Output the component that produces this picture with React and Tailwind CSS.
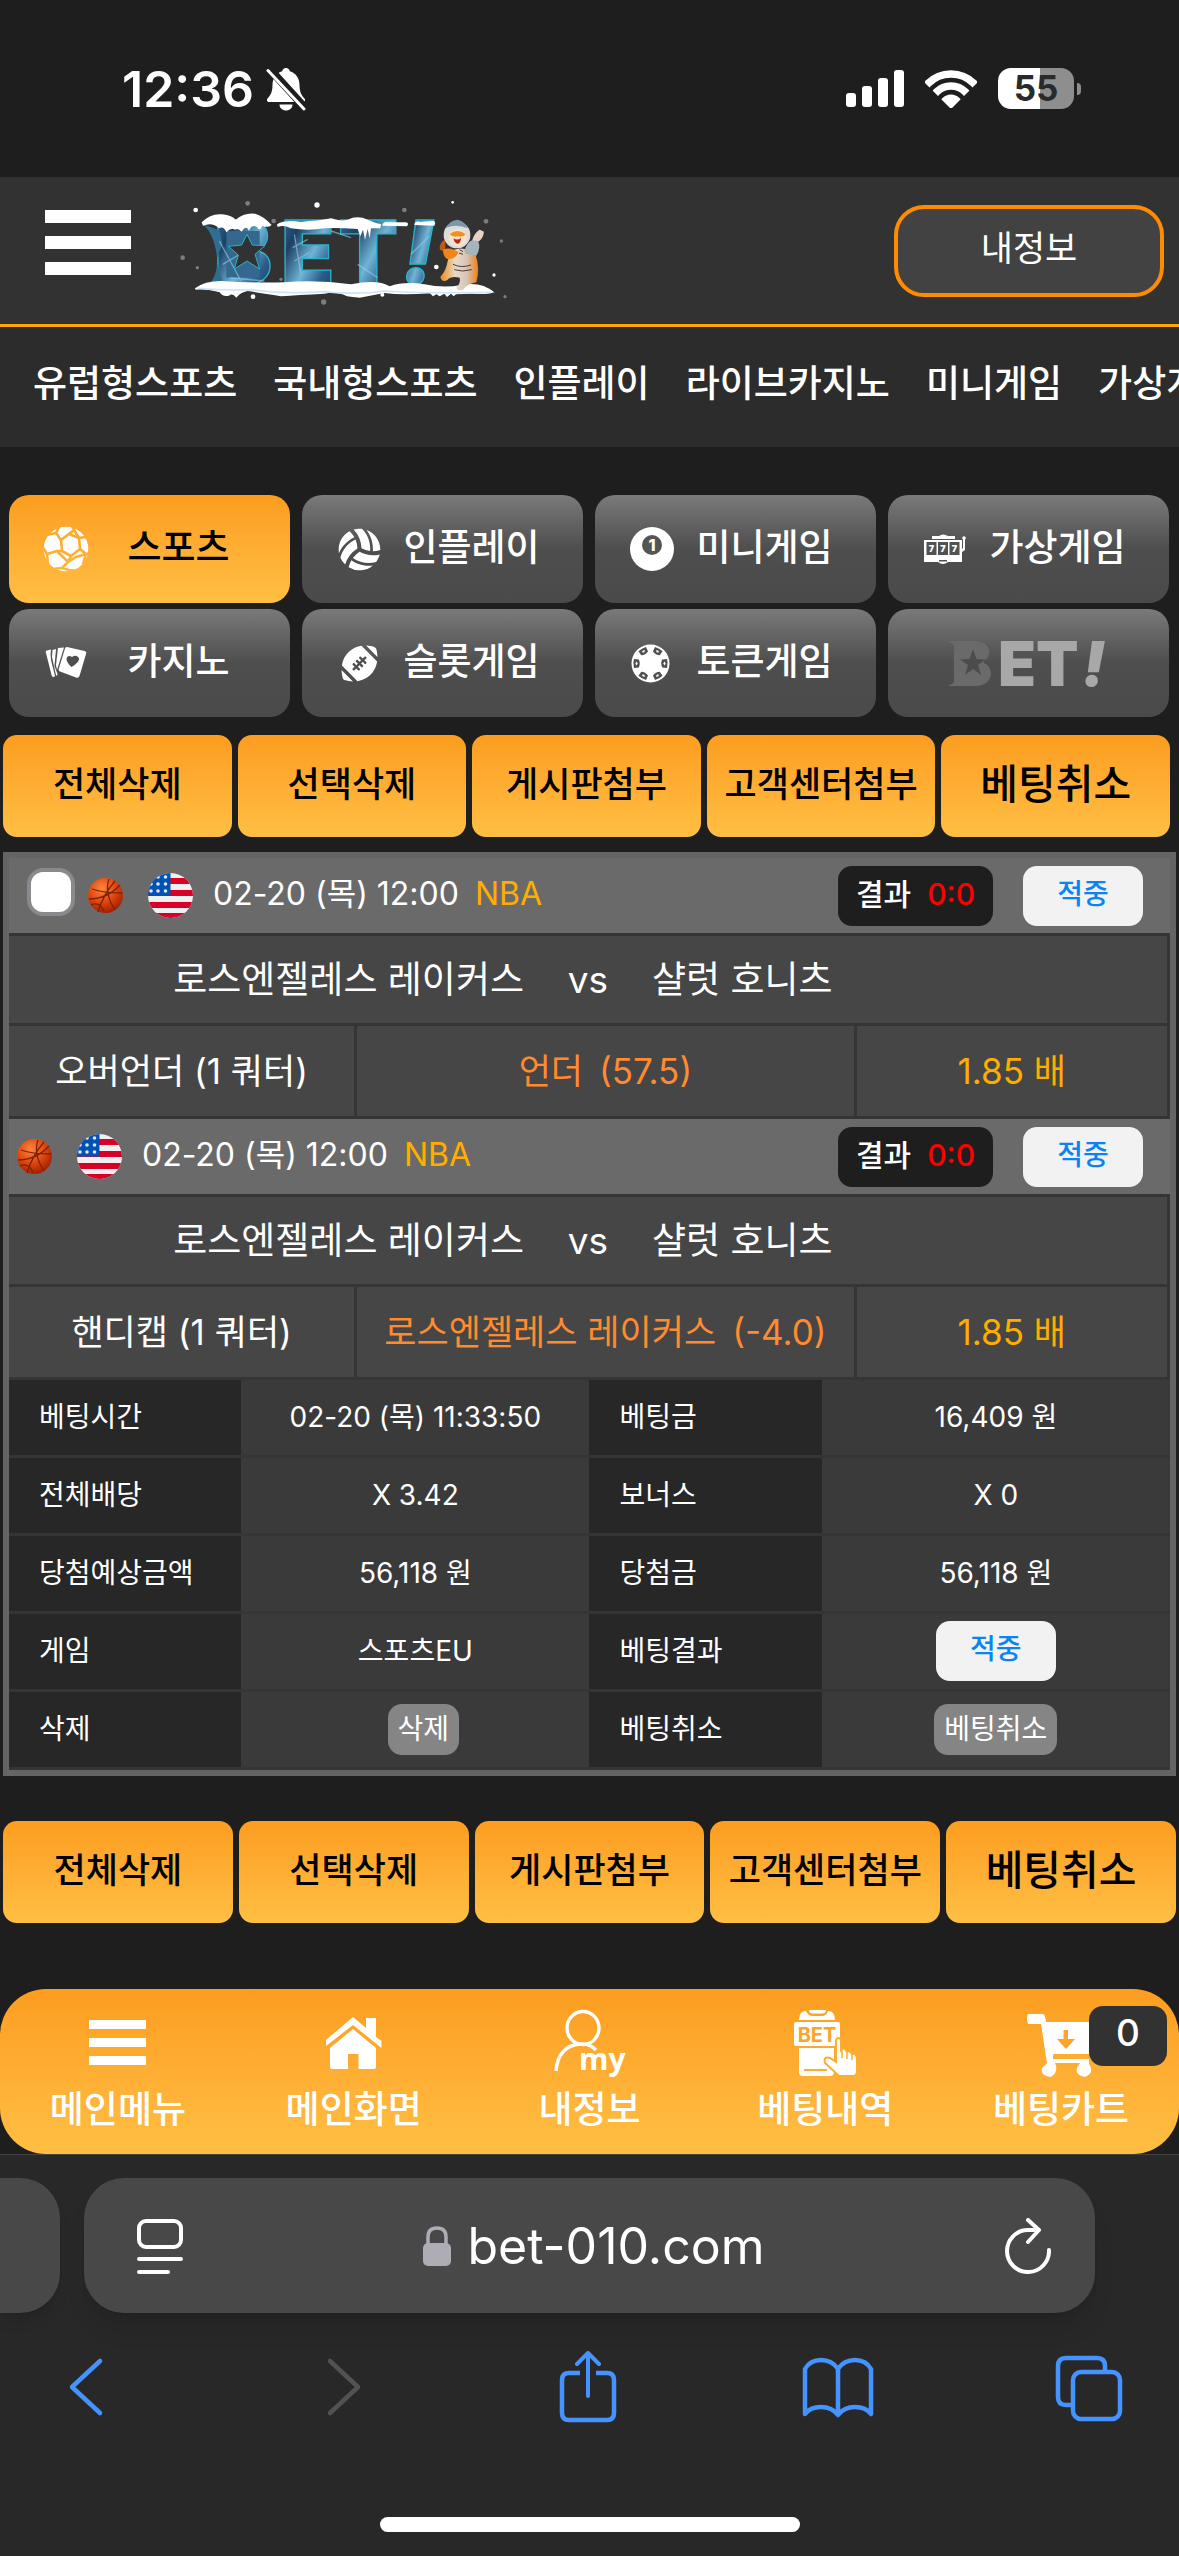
import React, { useState } from 'react';
import { FaFootballBall, FaVolleyballBall } from 'react-icons/fa';

const navLinks = ['유럽형스포츠', '국내형스포츠', '인플레이', '라이브카지노', '미니게임', '가상게임'];

const actions = ['전체삭제', '선택삭제', '게시판첨부', '고객센터첨부'];

const bets = [
  { date: '02-20 (목) 12:00', market: '오버언더 (1 쿼터)', pick: '언더', line: '(57.5)', selectable: true },
  { date: '02-20 (목) 12:00', market: '핸디캡 (1 쿼터)', pick: '로스엔젤레스 레이커스', line: '(-4.0)', selectable: false },
];

function BellOffIcon() {
  return (
    <svg className="h-11 w-10" viewBox="0 0 40 44" fill="white" aria-hidden="true">
      <mask id="bell-cut">
        <rect width="40" height="44" fill="white" />
        <path d="M0 -2 L42 44" stroke="black" strokeWidth="8" />
      </mask>
      <g mask="url(#bell-cut)">
        <path d="M20 1c2.200 0 3.600 1.500 3.800 3.300 6 1.800 9.700 7 9.700 13.700 0 8 2.500 10.500 5 13.500 1.300 1.700.3 3.500-1.800 3.500H3.300c-2.100 0-3.100-1.800-1.800-3.500C4 28.500 6.500 26 6.500 18c0-6.700 3.700-11.900 9.700-13.700C16.400 2.500 17.800 1 20 1z" />
        <path d="M13.500 37.500h13c0 3.500-3 6-6.500 6s-6.500-2.500-6.500-6z" />
      </g>
      <path d="M2 3.500 L38 42" stroke="white" strokeWidth="3" strokeLinecap="round" />
    </svg>
  );
}

function StatusIcons() {
  return (
    <div className="flex items-center">
      <svg className="h-[38px] w-[60px]" viewBox="0 0 60 38" fill="white" aria-hidden="true">
        <rect x="1" y="23" width="10" height="14" rx="3" />
        <rect x="17" y="16" width="10" height="21" rx="3" />
        <rect x="33" y="8" width="10" height="29" rx="3" />
        <rect x="49" y="0" width="10" height="37" rx="3" />
      </svg>
      <svg className="ml-5 h-[38px] w-[52px]" viewBox="0 0 52 38" fill="none" stroke="white" aria-hidden="true">
        <clipPath id="wifi-fan">
          <path d="M26 39 L-8 5 L-8 -6 L60 -6 L60 5 Z" />
        </clipPath>
        <g clipPath="url(#wifi-fan)">
          <circle cx="26" cy="36.500" r="32.500" strokeWidth="7.500" />
          <circle cx="26" cy="36.500" r="20.500" strokeWidth="7.500" />
          <circle cx="26" cy="36.500" r="6" strokeWidth="12" />
        </g>
      </svg>
      <div className="ml-[21px] flex items-center">
        <div className="flex h-[41px] w-[76px] items-center justify-center rounded-[13px] bg-[linear-gradient(90deg,#fff_55%,#8e8e8e_55%)] text-[35px] leading-none font-bold text-[#2a2a2a]">
          55
        </div>
        <div className="ml-[3px] h-3 w-1 rounded-r-full bg-[#8e8e8e]" />
      </div>
    </div>
  );
}

function SnowLogo() {
  return (
    <svg className="h-[140px] w-[400px] overflow-visible" viewBox="0 0 1200 420" role="img" aria-label="BET!">
      <defs>
        <linearGradient id="ice" x1="0" y1="0" x2="1" y2="1">
          <stop offset="0" stopColor="#3f86ae" />
          <stop offset="0.3" stopColor="#1d3f63" />
          <stop offset="0.55" stopColor="#6fb4d6" />
          <stop offset="0.75" stopColor="#2a5c8a" />
          <stop offset="1" stopColor="#16365c" />
        </linearGradient>
        <linearGradient id="tiger" x1="0" y1="0" x2="1" y2="0">
          <stop offset="0" stopColor="#f08a1c" />
          <stop offset="0.4" stopColor="#e8d8c8" />
          <stop offset="0.7" stopColor="#d8c4b4" />
          <stop offset="1" stopColor="#ee7f12" />
        </linearGradient>
      </defs>
      <g fill="url(#ice)" stroke="#28b4cc" strokeWidth="4" fontFamily="Inter, sans-serif" fontWeight="900" fontSize="262">
        <text x="188" y="308">B</text>
        <text x="390" y="308">E</text>
        <text x="562" y="308">T</text>
        <text x="752" y="308" fontStyle="italic">!</text>
      </g>
      <rect x="226" y="150" width="100" height="140" fill="#34688f" />
      <path d="M156 130 L205 148 L215 190 L198 230 Q190 160 156 130Z M198 250 L215 300 L180 304Q196 280 198 250Z" fill="#2f6d93" />
      <g stroke="#8fd0e8" strokeWidth="4" opacity="0.6" fill="none">
        <path d="M205 180 L270 300 M215 250 L300 200 M235 290 L340 300 M430 160 L450 280 M425 200 L470 175 M430 240 L475 215 M540 150 L600 170 M620 250 L680 290 M780 220 L835 165" />
      </g>
      <path d="M288 160 L304 192 L342 194 L312 220 L326 264 L288 240 L250 264 L262 222 L232 196 L272 192Z" fill="#323232" stroke="#28b4cc" strokeWidth="3" />
      <g fill="white">
        <path d="M152 124 Q180 96 214 100 Q244 104 254 116 Q280 94 312 98 Q336 104 362 132 Q350 142 334 134 Q326 154 318 138 Q302 128 294 150 Q286 130 272 152 Q262 140 252 146 Q240 138 226 154 Q218 134 204 142 Q184 122 156 134Z" />
        <path d="M378 130 Q400 116 450 122 Q500 120 540 112 Q570 122 590 116 Q620 102 650 116 Q674 126 690 130 L688 142 L660 142 L656 172 L650 144 L642 176 L636 146 L628 166 L620 144 Q560 140 520 142 Q470 150 420 142 Q396 130 380 138Z" />
        <path d="M694 134 Q696 120 712 124 L764 124 Q776 126 768 136Z M790 132 Q792 118 808 122 L848 120 Q856 124 850 134Z" />
        <path d="M132 322 Q160 300 210 300 Q300 306 400 304 Q500 296 600 310 Q680 294 716 316 Q760 300 820 310 Q880 322 930 312 Q990 300 1030 334 Q1010 342 960 338 L915 340 L908 346 L900 338 L888 348 L880 338 L866 346 L856 340 L846 346 L836 336 Q760 344 700 336 Q660 344 626 350 Q600 348 588 346 Q560 330 520 338 Q440 342 390 346 Q330 336 290 330 Q268 334 256 350 Q244 334 234 344 Q214 348 206 334 Q160 322 134 326Z" />
      </g>
      <path d="M140 322 Q220 328 300 326 Q400 340 520 332 Q620 342 700 330 Q800 338 1020 334" fill="none" stroke="#cfe4f6" strokeWidth="5" />
      <g>
        <path d="M884 176 Q866 180 866 204 Q874 214 882 208" fill="#c05a10" />
        <path d="M900 210 Q940 190 974 222 Q988 262 976 304 Q950 308 936 326 Q920 332 916 320 Q930 306 926 290 Q900 284 888 298 Q872 304 868 288 Q886 268 890 240Z" fill="url(#tiger)" />
        <path d="M940 210 Q950 180 964 178 Q970 156 986 146 L998 152 Q998 170 982 182 Q990 200 976 224 L944 218Z" fill="#a8b4bc" />
        <path d="M964 178 Q970 156 986 146 L998 152 Q998 168 984 180Z" fill="#ead2c0" />
        <path d="M876 206 Q900 196 922 214 Q914 236 888 234 Q876 226 876 206Z" fill="#f0861a" />
        <circle cx="918" cy="162" r="40" fill="#dcdcdc" />
        <path d="M886 140 Q896 118 920 116 Q944 122 950 142 Q918 128 886 140Z" fill="#7d97a6" />
        <circle cx="920" cy="170" r="27" fill="#f7e2cc" />
        <path d="M896 160 Q918 140 944 160 Q936 170 920 166 Q906 170 896 160Z" fill="#f0921e" />
        <path d="M908 172 Q920 180 930 170 Q930 188 918 188 Q908 184 908 172Z" fill="#b8271c" />
        <path d="M906 250 Q930 262 960 252 M910 266 Q934 274 962 266 M926 206 l10 6 M924 216 l12 4" stroke="#4a3a32" strokeWidth="3" fill="none" />
      </g>
      <g fill="white">
        <circle cx="134" cy="87" r="7" />
        <circle cx="498" cy="72" r="8" />
        <circle cx="856" cy="258" r="7" />
        <circle cx="306" cy="347" r="7" />
        <circle cx="694" cy="341" r="6" />
        <circle cx="1029" cy="282" r="5" />
        <circle cx="905" cy="64" r="4" />
      </g>
      <g fill="#7d7d7d">
        <circle cx="290" cy="67" r="7" />
        <circle cx="368" cy="120" r="7" />
        <circle cx="760" cy="87" r="7" />
        <circle cx="1005" cy="121" r="7" />
        <circle cx="1051" cy="180" r="5" />
        <circle cx="95" cy="230" r="7" />
        <circle cx="139" cy="260" r="5" />
        <circle cx="518" cy="363" r="8" />
        <circle cx="1062" cy="347" r="5" />
        <circle cx="390" cy="295" r="5" />
      </g>
    </svg>
  );
}

function SoccerIcon() {
  return (
    <svg className="size-[46px]" viewBox="-23 -23 46 46" aria-hidden="true">
      <mask id="soccer-seams">
        <circle r="22.500" fill="white" />
        <g stroke="black" strokeWidth="2.600" fill="none" strokeLinejoin="round">
          <path d="M-5 -9 L3 -15 L13 -11 L14 0 L5 7 L-4 2Z" />
          <path d="M-5 -9 L-10 -16 L-20 -14 M-10 -16 L-6 -24 M3 -15 L8 -19 L6 -25 M8 -19 L13 -11 M13 -11 L20 -12 M14 0 L20 5 L24 4 M-4 2 L-9 2 L-19 5 M-19 5 L-24 -3 M-19 5 L-18 16 M5 7 L2 13 L-4 19 L-14 20 M2 13 L-9 2 M2 13 L10 8 L20 5 L17 15 M-4 19 L3 21 L12 22" />
        </g>
      </mask>
      <circle r="22.500" fill="white" mask="url(#soccer-seams)" />
    </svg>
  );
}

function CardsIcon() {
  return (
    <svg className="h-[34px] w-[42px]" viewBox="0 0 42 34" fill="white" aria-hidden="true">
      <path d="M1 7 Q0 5 2 4.500 L6 3.500 Q5 8 6 14 L10 30 L9 31 Q7 31.500 6.500 29Z" />
      <path d="M7.500 4 L11 3 L9.500 20 L12.500 28 L12 30 Q11 30 10.500 27 L7 11Z" />
      <path d="M13 2 L19 1.500 L12 24 L11 19Z" />
      <path d="M22 1 L39.500 5 Q42 6 41 8 L34.500 30 Q33.500 32.500 31 31.500 L15 25.500 Q13 24.500 14 22 L20 2.500 Q20.500 .7 22 1Z" />
      <path d="M26.500 21 Q21 16 21.500 12.500 Q23 8.500 27 11 Q31 8 34 12 Q35 16 26.500 21Z" fill="#4e4e4e" />
    </svg>
  );
}

function BilliardIcon() {
  return (
    <svg className="size-[44px]" viewBox="0 0 44 44" aria-hidden="true">
      <circle cx="22" cy="22" r="22" fill="white" />
      <circle cx="22" cy="18" r="10" fill="#555" />
      <text x="22" y="24" textAnchor="middle" fontFamily="Inter, sans-serif" fontWeight="800" fontSize="16" fill="white">1</text>
    </svg>
  );
}

function SlotIcon() {
  return (
    <svg className="h-[30px] w-[42px]" viewBox="0 0 42 30" fill="white" aria-hidden="true">
      <path d="M8 5 V2 H15 Q19 -1 24 2 H31 V5Z" />
      <path d="M0 6 H38 V28 H24 Q19 32 14 28 H0Z" />
      <path d="M39 4 h2 v12 l-3 2 v-3 l1 -1z" />
      <circle cx="40" cy="4" r="1.800" />
      <g fill="#525252">
        <rect x="2.500" y="8" width="10" height="13" />
        <rect x="14" y="8" width="10" height="13" />
        <rect x="25.500" y="8" width="10" height="13" />
        <rect x="15" y="26" width="8" height="1.500" />
      </g>
      <g fontFamily="Inter, sans-serif" fontWeight="900" fontSize="9" textAnchor="middle">
        <text x="7.500" y="18">7</text>
        <text x="19" y="18">7</text>
        <text x="30.500" y="18">7</text>
      </g>
    </svg>
  );
}

function ChipIcon() {
  return (
    <svg className="mr-1 size-[39px]" viewBox="-20 -20 40 40" aria-hidden="true">
      <circle r="19.500" fill="white" />
      {[0, 60, 120, 180, 240, 300].map((angle) => (
        <g key={angle} transform={`rotate(${angle})`}>
          <path d="M12 -4 L17 -4.500 Q18 0 17 4.500 L12 4 Q10 0 12 -4Z" fill="#505050" />
          <path d="M14.500 -2 L15.500 0 L14.500 2 L13 0Z" fill="white" />
        </g>
      ))}
    </svg>
  );
}

function GrayLogo() {
  return (
    <svg className="h-[60px] w-[170px] overflow-visible" viewBox="0 0 170 60" role="img" aria-label="BET!">
      <g fontFamily="Inter, sans-serif" fontWeight="900" fontSize="62">
        <text x="7" y="53" fill="#6a6a6a">B</text>
        <text x="54" y="53" fill="#a8a8a8">E</text>
        <text x="92" y="53" fill="#a8a8a8">T</text>
        <text x="138" y="53" fill="#a8a8a8" fontStyle="italic">!</text>
      </g>
      <path d="M4 8 H14 V20 Q12 12 4 8Z M4 53 H14 V42 Q12 50 4 53Z" fill="#6a6a6a" />
      <rect x="16" y="14" width="24" height="32" fill="#6a6a6a" />
      <path d="M29 16 L32.500 26 L42 26.500 L34 32 L37 42 L29 36 L21 42 L24 32 L16 26.500 L25.500 26Z" fill="#4c4c4c" />
    </svg>
  );
}

const categories = [
  { label: '스포츠', icon: <SoccerIcon /> },
  { label: '인플레이', icon: <FaVolleyballBall className="size-[43px]" /> },
  { label: '미니게임', icon: <BilliardIcon /> },
  { label: '가상게임', icon: <SlotIcon /> },
  { label: '카지노', icon: <CardsIcon /> },
  { label: '슬롯게임', icon: <FaFootballBall className="size-[37px]" /> },
  { label: '토큰게임', icon: <ChipIcon /> },
];

function Categories() {
  const [selected, setSelected] = useState('스포츠');

  return (
    <div className="grid grid-cols-4 gap-x-3 gap-y-[6px] pr-[10px] pl-[9px]">
      {categories.map(({ label, icon }) => (
        <button
          key={label}
          type="button"
          onClick={() => setSelected(label)}
          className={`flex h-[108px] items-center rounded-[20px] pr-[22px] pl-[34px] text-[37px] leading-none font-medium ${
            selected === label
              ? 'bg-linear-to-b from-[#fc9d1f] to-[#ffbf43] text-black'
              : 'bg-linear-to-b from-[#7a7a7a] via-[#4e4e4e] to-[#4a4a4a] text-white'
          }`}
        >
          <span className="flex w-[46px] shrink-0 justify-center text-white">{icon}</span>
          <span className="flex-1 pb-1 text-center whitespace-nowrap">{label}</span>
        </button>
      ))}
      <button
        type="button"
        className="flex h-[108px] items-center justify-center rounded-[20px] bg-linear-to-b from-[#7a7a7a] via-[#4e4e4e] to-[#4a4a4a]"
      >
        <GrayLogo />
      </button>
    </div>
  );
}

function ActionButtons({ className }) {
  return (
    <div className={`grid grid-cols-5 gap-[6px] pl-[3px] text-black ${className}`}>
      {actions.map((label) => (
        <button
          key={label}
          type="button"
          className="h-[102px] rounded-[14px] bg-linear-to-b from-[#fc9d1f] to-[#ffbf43] pb-1 text-[35px] leading-none font-medium whitespace-nowrap"
        >
          {label}
        </button>
      ))}
      <button
        type="button"
        className="h-[102px] rounded-[14px] bg-linear-to-b from-[#fc9d1f] to-[#ffbf43] pb-1 text-[41px] leading-none font-medium whitespace-nowrap"
      >
        베팅취소
      </button>
    </div>
  );
}

function BasketballIcon() {
  return (
    <svg className="size-[37px]" viewBox="0 0 37 37" aria-hidden="true">
      <defs>
        <radialGradient id="basketball" cx="0.4" cy="0.3" r="0.75">
          <stop offset="0" stopColor="#ff8640" />
          <stop offset="0.5" stopColor="#e24a0c" />
          <stop offset="1" stopColor="#9c1a04" />
        </radialGradient>
      </defs>
      <circle cx="18.500" cy="18.500" r="17.500" fill="url(#basketball)" />
      <path d="M2 22 Q20 22 33 8 M5 12 Q16 16 35 16 M11 35 Q16 18 28 4 M22 2 Q17 16 28 33 M4 28 Q12 24 17 34" fill="none" stroke="#7a2208" strokeWidth="1.300" />
    </svg>
  );
}

function UsFlag() {
  return (
    <svg className="size-[45px]" viewBox="0 0 45 45" aria-hidden="true">
      <clipPath id="flag-round">
        <circle cx="22.500" cy="22.500" r="22.500" />
      </clipPath>
      <g clipPath="url(#flag-round)">
        <rect width="45" height="45" fill="#f0f0f0" />
        {[5, 17, 29, 40].map((y) => (
          <rect key={y} y={y} width="45" height="6" fill="#d80027" />
        ))}
        <rect width="22.500" height="22.500" fill="#0052b4" />
        {[4, 11, 18].map((y) => (
          <g key={y} fill="#dfe8f4">
            <circle cx="3" cy={y} r="1.800" />
            <circle cx="10" cy={y} r="1.800" />
            <circle cx="17.500" cy={y} r="1.800" />
          </g>
        ))}
      </g>
    </svg>
  );
}

function HitBadge() {
  return (
    <span className="inline-flex h-[60px] w-[120px] items-center justify-center rounded-[14px] bg-[#f2f2f2] pb-1 text-[28px] leading-none font-medium text-[#0a85f0]">
      적중
    </span>
  );
}

function BetEntry({ bet }) {
  return (
    <section>
      <div className="flex h-[78px] items-center border-b-[3px] border-[#353535] bg-[#6a6a6a] pr-[27px] pl-[7px] text-[32px] leading-none">
        {bet.selectable && (
          <input
            type="checkbox"
            aria-label="베팅 선택"
            className="mr-3 mb-2 ml-[11px] size-12 appearance-none rounded-2xl border-4 border-[#8a8a8e] bg-white"
          />
        )}
        <BasketballIcon />
        <span className="mr-5 ml-6">
          <UsFlag />
        </span>
        <span className="mr-4 pb-1">{bet.date}</span>
        <span className="pb-1 text-[#ffae00]">NBA</span>
        <span className="mr-[30px] ml-auto flex h-[60px] w-[155px] items-center justify-center gap-4 rounded-[14px] bg-[#1e1e1e] pb-1 text-[30px] font-medium">
          결과
          <span className="text-[#ff0000]">0:0</span>
        </span>
        <HitBadge />
      </div>
      <div className="grid h-[90px] grid-cols-[1fr_128px_1fr] items-center border-r-[3px] border-b-[3px] border-[#353535] bg-[#464646] text-[37px] leading-none">
        <span className="text-right">로스엔젤레스 레이커스</span>
        <span className="text-center">vs</span>
        <span>샬럿 호니츠</span>
      </div>
      <div className="grid h-[93px] grid-cols-[30%_43%_27%] text-[35px] leading-none whitespace-nowrap">
        <span className="flex items-center justify-center border-r-[3px] border-b-[3px] border-[#353535] bg-[#464646]">
          {bet.market}
        </span>
        <span className="flex items-center justify-center gap-4 border-r-[3px] border-b-[3px] border-[#353535] bg-[#464646] text-[#ff8a30]">
          <span>{bet.pick}</span>
          <span>{bet.line}</span>
        </span>
        <span className="flex items-center justify-center border-r-[3px] border-b-[3px] border-[#353535] bg-[#464646] text-[#ffae00]">
          1.85 배
        </span>
      </div>
    </section>
  );
}

const grayButton = 'h-[51px] rounded-[14px] bg-[#858585] px-[10px] text-[28px] leading-none';

const infoRows = [
  ['베팅시간', '02-20 (목) 11:33:50', '베팅금', '16,409 원'],
  ['전체배당', 'X 3.42', '보너스', 'X 0'],
  ['당첨예상금액', '56,118 원', '당첨금', '56,118 원'],
  ['게임', '스포츠EU', '베팅결과', <HitBadge />],
  ['삭제', <button type="button" className={`ml-4 ${grayButton}`}>삭제</button>, '베팅취소', <button type="button" className={grayButton}>베팅취소</button>],
];

const labelCell = 'bg-[#272727] p-0 pb-1 pl-[30px] text-left font-normal whitespace-nowrap shadow-[inset_0_-3px_#353535]';
const valueCell = 'bg-[#3a3a3a] p-0 pb-1 text-center shadow-[inset_0_-3px_#353535]';

function InfoTable() {
  return (
    <table className="w-full table-fixed border-collapse text-[28px] leading-none">
      <colgroup>
        <col className="w-[20%]" />
        <col className="w-[30%]" />
        <col className="w-[20%]" />
        <col className="w-[30%]" />
      </colgroup>
      <tbody>
        {infoRows.map(([labelA, valueA, labelB, valueB]) => (
          <tr key={labelA} className="h-[78px]">
            <th scope="row" className={labelCell}>{labelA}</th>
            <td className={valueCell}>
              <span className="flex items-center justify-center">{valueA}</span>
            </td>
            <th scope="row" className={labelCell}>{labelB}</th>
            <td className={valueCell}>
              <span className="flex items-center justify-center">{valueB}</span>
            </td>
          </tr>
        ))}
      </tbody>
    </table>
  );
}

const bottomItems = [
  {
    label: '메인메뉴',
    icon: (
      <svg className="h-[68px] w-[72px]" viewBox="0 0 72 68" fill="white" aria-hidden="true">
        <path d="M7 10h57v9h-57zM7 28h57v9h-57zM7 46h57v9h-57z" />
      </svg>
    ),
  },
  {
    label: '메인화면',
    icon: (
      <svg className="h-[68px] w-[72px]" viewBox="0 0 72 68" fill="white" aria-hidden="true">
        <path d="M8 30 L35 7 L48 18 V8 H58 V27 L63.500 31 V38 L35 15 L8 36Z" />
        <path d="M35 19 L58 38 V57 Q58 59 56 59 H40.500 V44 H30 V59 H14 Q12 59 12 57 V38Z" />
      </svg>
    ),
  },
  {
    label: '내정보',
    icon: (
      <svg className="h-[68px] w-[72px] overflow-visible" viewBox="0 0 72 68" aria-hidden="true">
        <g fill="none" stroke="white" strokeWidth="3.400">
          <ellipse cx="30" cy="18" rx="16" ry="16.500" />
          <path d="M3 61 Q5 36 27 34 Q36 33 43 40" />
        </g>
        <text x="26" y="60" fontFamily="Open Sans, sans-serif" fontWeight="700" fontSize="30" fill="white">my</text>
      </svg>
    ),
  },
  {
    label: '베팅내역',
    icon: (
      <svg className="h-[68px] w-[72px]" viewBox="0 0 72 68" fill="white" aria-hidden="true">
        <path d="M10 10 Q10 1 17 1 Q19 6 24 6 H34 Q38 5 39 1 Q46 1 46 10Z M20 0 H37 Q37 3.500 33 3.500 H24 Q20 3.500 20 0Z" />
        <rect x="5" y="12" width="46" height="24" rx="2" />
        <path d="M10 38 H45 V62 Q45 66 41 66 H14 Q10 66 10 62Z" />
        <path d="M15 60 H38" stroke="#fdae30" strokeWidth="2" />
        <path d="M47 30 Q49.500 26 52 30 V40 Q55 36 58 42 Q61 40 63 44 Q67 43 68 48 V61 Q68 66 64 66 H50 L36 53 Q34 46 41 48 L47 52Z" stroke="#fdae30" strokeWidth="2" />
        <path d="M53 40 V48 M58 42 V49 M63 44 V50" stroke="#fdae30" strokeWidth="1.500" />
        <text x="28" y="32" textAnchor="middle" fontFamily="Inter, sans-serif" fontWeight="700" fontSize="20" fill="#fba52a">BET</text>
      </svg>
    ),
  },
  {
    label: '베팅카트',
    icon: (
      <svg className="h-[68px] w-[72px]" viewBox="0 0 72 68" fill="white" aria-hidden="true">
        <path d="M3 4 H18 Q20 4 21 12 H72 L68 46 H28 V49 H64 V54 Q70 63 60 67 Q50 65 52 58 L55 53 H30 Q34 62 26 67 Q15 66 17 58 L22 53 L16 14 H3 Q1 8 3 4Z" />
        <path d="M28 44 H66 V48 H29Z" fill="#fdae30" />
        <path d="M38.500 20 H43 V29 H50 L41 39 L32 29 H38.500Z" fill="#fba52a" />
      </svg>
    ),
  },
];

function BottomNav() {
  return (
    <nav className="grid h-[165px] grid-cols-5 rounded-[46px] bg-linear-to-b from-[#fc9d1f] to-[#ffbf43]">
      {bottomItems.map(({ label, icon }, index) => (
        <a key={label} href="#" className="relative flex flex-col items-center gap-1 pt-[21px] text-[37px] leading-[56px] font-medium">
          {icon}
          {label}
          {index === 4 && (
            <span className="absolute top-[17px] right-3 h-[60px] w-[78px] rounded-[14px] bg-[#323232] text-center leading-[54px]">
              0
            </span>
          )}
        </a>
      ))}
    </nav>
  );
}

function BrowserBar() {
  return (
    <footer className="flex flex-1 flex-col border-t border-[#424242] bg-[#282828] font-['Inter',sans-serif]">
      <div className="flex gap-6 pt-[23px]">
        <div className="h-[135px] w-[60px] rounded-r-[40px] bg-[#484848] shadow-lg" />
        <div className="mr-[84px] flex h-[135px] flex-1 items-center justify-between rounded-[40px] bg-[#484848] pr-[44px] pl-[53px] shadow-xl">
          <button type="button" aria-label="페이지 메뉴">
            <svg className="h-[56px] w-[46px]" viewBox="0 0 46 56" fill="none" stroke="white" strokeWidth="4" strokeLinecap="round">
              <rect x="2" y="3" width="42" height="26" rx="7" />
              <path d="M2 41h42M2 54h29" />
            </svg>
          </button>
          <button type="button" className="flex items-center gap-4 text-[50px] leading-none">
            <svg className="h-10 w-7" viewBox="0 0 28 40" aria-hidden="true">
              <path d="M5 18 V11 Q5 2 14 2 Q23 2 23 11 V18" fill="none" stroke="#aeacb4" strokeWidth="3.500" />
              <rect y="17" width="28" height="23" rx="5" fill="#aeacb4" />
            </svg>
            bet-010.com
          </button>
          <button type="button" aria-label="새로고침">
            <svg className="h-[56px] w-[46px]" viewBox="0 0 46 56" fill="none" stroke="white" strokeWidth="4" strokeLinecap="round" strokeLinejoin="round">
              <path d="M44 32 A21 21 0 1 1 23 12 H34 M23 2 L34 12 L23 24" />
            </svg>
          </button>
        </div>
      </div>
      <div className="flex h-[148px] items-center justify-between pr-[54px] pl-[50px] text-[#4593ff]">
        <button type="button" aria-label="뒤로" className="flex w-[72px] justify-center">
          <svg className="h-[72px] w-10" viewBox="0 0 40 72" fill="none" stroke="currentColor" strokeWidth="4.500" strokeLinecap="round" strokeLinejoin="round">
            <path d="M34 10 L6 36 L34 62" />
          </svg>
        </button>
        <button type="button" aria-label="앞으로" className="flex w-[72px] justify-end text-[#525252]">
          <svg className="h-[72px] w-[52px]" viewBox="0 0 52 72" fill="none" stroke="currentColor" strokeWidth="4.500" strokeLinecap="round" strokeLinejoin="round">
            <path d="M9 10 L37 36 L9 62" />
          </svg>
        </button>
        <button type="button" aria-label="공유" className="flex w-[72px] justify-center">
          <svg className="h-[72px] w-[60px]" viewBox="0 0 60 72" fill="none" stroke="currentColor" strokeWidth="4.500" strokeLinecap="round" strokeLinejoin="round">
            <path d="M22 22 H11 Q4 22 4 29 V62 Q4 69 11 69 H49 Q56 69 56 62 V29 Q56 22 49 22 H38" strokeLinecap="butt" />
            <path d="M30 45 V3 M19 13 L30 2 L41 13" strokeWidth="4" />
          </svg>
        </button>
        <button type="button" aria-label="책갈피" className="flex w-[72px] justify-center">
          <svg className="h-[72px] w-[72px]" viewBox="0 0 72 72" fill="none" stroke="currentColor" strokeWidth="4.500" strokeLinejoin="round">
            <path d="M36 18 Q30 9 19 9 Q8 9 3 18 V63 Q8 56 19 56 Q30 56 36 64 Q42 56 53 56 Q64 56 69 63 V18 Q64 9 53 9 Q42 9 36 18 V64" />
          </svg>
        </button>
        <button type="button" aria-label="탭" className="flex w-[72px] justify-center">
          <svg className="h-[72px] w-[72px]" viewBox="0 0 72 72" fill="none" stroke="currentColor" strokeWidth="4.500">
            <rect x="20" y="21" width="47" height="47" rx="8" />
            <path d="M20 54 H13 Q5 54 5 46 V15 Q5 7 13 7 H44 Q52 7 52 15 V21" />
          </svg>
        </button>
      </div>
      <div className="mx-auto mt-auto mb-6 h-[15px] w-[420px] rounded-full bg-white" />
    </footer>
  );
}

function App() {
  return (
    <div className="flex min-h-screen flex-col bg-[#1e1e1e] font-['Inter','Noto_Sans_CJK_KR',sans-serif] text-white">
      <div className="flex h-[177px] items-center justify-between pr-[98px] pl-[122px] font-['Inter',sans-serif]">
        <div className="flex items-center gap-3 text-[50px] leading-none font-semibold">
          12:36
          <BellOffIcon />
        </div>
        <StatusIcons />
      </div>

      <header className="flex h-[150px] items-center border-b-[3px] border-[#ffa800] bg-[#323232] pr-[15px] pl-[45px]">
        <button type="button" aria-label="메뉴" className="mr-5 mb-4 flex w-[86px] flex-col gap-[13px]">
          <span className="h-[13px] bg-white" />
          <span className="h-[13px] bg-white" />
          <span className="h-[13px] bg-white" />
        </button>
        <SnowLogo />
        <button
          type="button"
          className="ml-auto h-[92px] w-[270px] rounded-[30px] border-4 border-[#ff8c00] bg-[#424242] pb-1 text-[35px] leading-none"
        >
          내정보
        </button>
      </header>

      <nav className="flex h-[120px] items-center gap-9 overflow-hidden bg-[#2c2c2c] pl-[33px] text-[37px] leading-none font-medium whitespace-nowrap">
        {navLinks.map((label) => (
          <a key={label} href="#" className="shrink-0 pb-2">
            {label}
          </a>
        ))}
      </nav>

      <main className="pt-12 pb-[66px]">
        <Categories />
        <ActionButtons className="mt-[18px] pr-[9px]" />
        <div className="mx-[3px] mt-[15px] mb-[45px] border-[6px] border-[#646464]">
          {bets.map((bet) => (
            <BetEntry key={bet.market} bet={bet} />
          ))}
          <InfoTable />
        </div>
        <ActionButtons className="pr-[3px]" />
      </main>

      <BottomNav />
      <BrowserBar />
    </div>
  );
}

export default App;
